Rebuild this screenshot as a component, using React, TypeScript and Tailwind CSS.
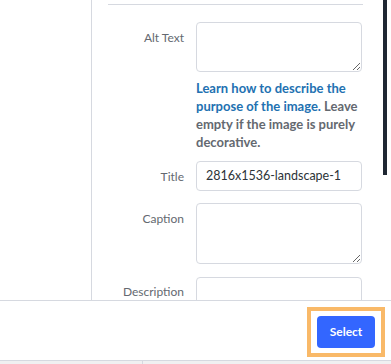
import React from "react";

export default function App() {
  const font = { fontFamily: 'Lato, "Noto Sans", sans-serif' };
  return (
    <div className="w-[391px] h-[364px] overflow-hidden bg-white relative" style={font}>
      <div className="flex h-[300px] overflow-hidden">
        <div className="w-[92px] shrink-0 border-r border-[#d6d9e0]" />
        <div className="flex-1 pl-[16px] pr-[28px]">
          <div className="mt-[4px] h-px bg-[#d6d9e0]" />
          {/* Alt text */}
          <div className="mt-[17px] flex gap-[12px]">
            <label className="w-[76px] shrink-0 text-right text-[12px] leading-[18px] pt-[7px] text-[#646970]">
              Alt Text
            </label>
            <div className="w-[166px]">
              <textarea className="block w-[166px] h-[50px] rounded-[4px] border border-[#d6d9e0] bg-white" />
              <p className="mt-[7px] text-[13px] leading-[18px] font-bold text-[#646970]">
                <span className="text-[#2271b1]">Learn how to describe the purpose of the image.</span> Leave empty if the image is purely decorative.
              </p>
            </div>
          </div>
          {/* Title */}
          <div className="mt-[10px] flex gap-[12px]">
            <label className="w-[76px] shrink-0 text-right text-[12px] leading-[18px] pt-[7px] text-[#646970]">
              Title
            </label>
            <div className="w-[166px] h-[30px] rounded-[4px] border border-[#d6d9e0] px-[9px] flex items-center text-[12.5px] text-[#2c3338] whitespace-nowrap overflow-hidden">
              2816x1536-landscape-1
            </div>
          </div>
          {/* Caption */}
          <div className="mt-[12px] flex gap-[12px]">
            <label className="w-[76px] shrink-0 text-right text-[12px] leading-[18px] pt-[7px] text-[#646970]">
              Caption
            </label>
            <textarea className="block w-[166px] h-[61px] rounded-[4px] border border-[#d6d9e0] bg-white" />
          </div>
          {/* Description */}
          <div className="mt-[13px] flex gap-[12px]">
            <label className="w-[76px] shrink-0 text-right text-[12px] leading-[18px] pt-[6px] text-[#646970]">
              Description
            </label>
            <textarea className="block w-[166px] h-[61px] rounded-[4px] border border-[#d6d9e0] bg-white" />
          </div>
        </div>
      </div>
      <div className="absolute right-[4px] top-0 w-[4px] h-[175px] bg-[#1f2733]" />
      <div className="h-[60px] border-t border-[#d6d9e0] flex justify-end items-start pt-[6px] pr-[6px]">
        <div className="border-4 border-[#f9b968] px-[6px] py-[5px]">
          <button className="w-[58px] h-[32px] rounded-[4px] bg-[#3366ff] text-white text-[12px] font-bold">
            Select
          </button>
        </div>
      </div>
      <div className="h-[4px] border-t border-[#d6d9e0] bg-[#f0f0f1] flex">
        <div className="w-[143px] border-r border-[#d6d9e0]" />
      </div>
    </div>
  );
}
